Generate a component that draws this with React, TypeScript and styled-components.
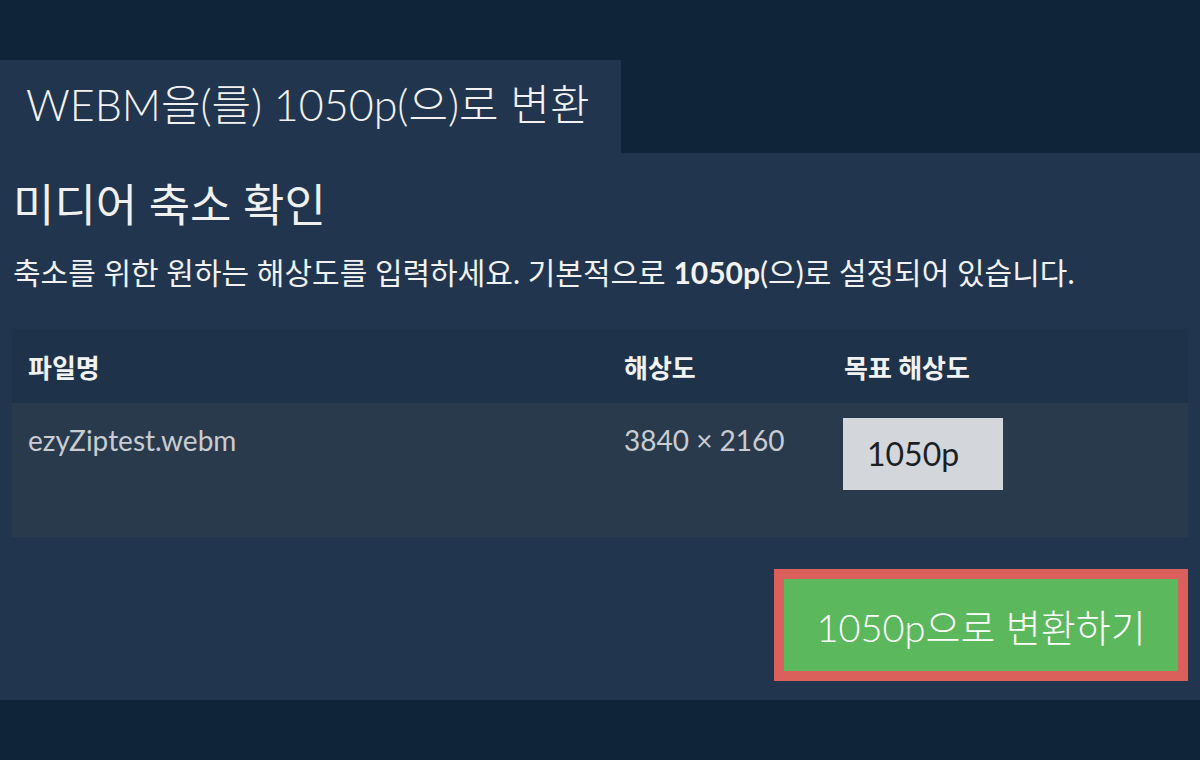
import React from 'react'
import styled, { createGlobalStyle } from 'styled-components'

const GlobalStyle = createGlobalStyle`
  html, body {
    margin: 0;
    padding: 0;
    background: #0f2339;
    font-family: Lato, "Noto Sans CJK KR", sans-serif;
  }
`

const Page = styled.div`
  width: 1200px;
  height: 760px;
  background: #0f2339;
  padding-top: 60px;
  box-sizing: border-box;
  overflow: hidden;
`

const Tab = styled.div`
  width: 621px;
  height: 93px;
  background: #21364e;
  display: flex;
  align-items: center;
  padding: 0 0 10px 26px;
  box-sizing: border-box;
  color: #f2f2f2;
  font-size: 43px;
  font-weight: 300;
  white-space: nowrap;
`

const Panel = styled.div`
  height: 547px;
  background: #21364e;
  padding: 0 12px;
  box-sizing: border-box;
  display: flex;
  flex-direction: column;
`

const Heading = styled.h1`
  margin: 22px 0 0 1px;
  font-size: 45px;
  font-weight: 400;
  color: #f0f0f0;
  line-height: 60px;
  white-space: nowrap;
`

const Description = styled.p`
  margin: 17px 0 0 1px;
  font-size: 30px;
  font-weight: 400;
  color: #f2f2f2;
  line-height: 40px;
  white-space: nowrap;

  b {
    font-weight: 700;
  }
`

const Table = styled.div`
  margin-top: 37px;
  display: grid;
  grid-template-columns: 596px 220px 1fr;
`

const HeadCell = styled.div`
  background: #1e3249;
  height: 74px;
  display: flex;
  align-items: center;
  padding-left: 16px;
  color: #f2f2f2;
  font-size: 26px;
  font-weight: 700;
  white-space: nowrap;
`

const Cell = styled.div`
  background: #2a3a4d;
  height: 134px;
  padding: 19px 0 0 16px;
  box-sizing: border-box;
  color: #c9ccd1;
  font-size: 28px;
  line-height: 36px;
  white-space: nowrap;
`

const ResolutionInput = styled.div`
  width: 160px;
  height: 72px;
  margin: -4px 0 0 -1px;
  background: #d3d7dc;
  color: #1b1f26;
  font-size: 32px;
  display: flex;
  align-items: center;
  padding-left: 24px;
  box-sizing: border-box;
`

const Actions = styled.div`
  display: flex;
  justify-content: flex-end;
  margin-top: 32px;
`

const ConvertButton = styled.button`
  width: 414px;
  height: 112px;
  background: #5cb85c;
  border: 10px solid #db605c;
  color: #ffffff;
  font-family: Lato, "Noto Sans CJK KR", sans-serif;
  font-size: 38px;
  font-weight: 300;
  white-space: nowrap;
  cursor: pointer;
`

const App = () => {
  return <Page>
    <GlobalStyle />
    <Tab>WEBM을(를) 1050p(으)로 변환</Tab>
    <Panel>
      <Heading>미디어 축소 확인</Heading>
      <Description>
        축소를 위한 원하는 해상도를 입력하세요. 기본적으로 <b>1050p</b>(으)로 설정되어 있습니다.
      </Description>
      <Table>
        <HeadCell>파일명</HeadCell>
        <HeadCell>해상도</HeadCell>
        <HeadCell>목표 해상도</HeadCell>
        <Cell>ezyZiptest.webm</Cell>
        <Cell>3840 × 2160</Cell>
        <Cell>
          <ResolutionInput>1050p</ResolutionInput>
        </Cell>
      </Table>
      <Actions>
        <ConvertButton>1050p으로 변환하기</ConvertButton>
      </Actions>
    </Panel>
  </Page>
}

export default App
